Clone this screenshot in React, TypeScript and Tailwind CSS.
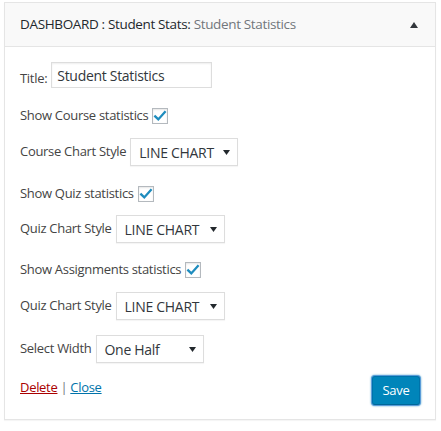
import React from "react";

const font = { fontFamily: '"Open Sans", "Liberation Sans", sans-serif' };

function Check() {
  return (
    <div className="ml-[4px] flex h-[16px] w-[16px] items-center justify-center border border-[#b4b9be] bg-white shadow-[inset_0_1px_2px_rgba(0,0,0,0.1)]">
      <svg width="14" height="14" viewBox="0 0 14 14">
        <path d="M2.2 7.4 L5.3 10.4 L11.8 3.2" fill="none" stroke="#1e8cbe" strokeWidth="2.3" strokeLinecap="square" />
      </svg>
    </div>
  );
}

function Select({ value, w }: { value: string; w: string }) {
  return (
    <div className={`ml-[4px] flex h-[28px] items-center justify-between border border-[#ddd] bg-white pl-[8px] pr-[7px] text-[14px] tracking-[-0.3px] text-[#32373c] shadow-[0_1px_1px_rgba(0,0,0,0.04)] ${w}`}>
      <span>{value}</span>
      <svg width="7" height="5" viewBox="0 0 7 5">
        <path d="M0 0 L7 0 L3.5 5 Z" fill="#23282d" />
      </svg>
    </div>
  );
}

export default function App() {
  return (
    <div className="min-h-[431px] w-[441px] bg-white pl-[4px] pt-[2px] text-[13px] tracking-[-0.3px] text-[#444]" style={font}>
      <div className="w-[432px] border border-[#e5e5e5] bg-white shadow-[0_1px_1px_rgba(0,0,0,0.04)]">
        <div className="flex h-[44px] items-center justify-between border-b border-[#e5e5e5] bg-[#f9f9f9] pl-[15px] pr-[17px]">
          <div className="text-[13.5px] tracking-[-0.35px] text-[#23282d]">
            DASHBOARD : Student Stats: <span className="text-[#72777c]">Student Statistics</span>
          </div>
          <svg width="8" height="6" viewBox="0 0 8 6">
            <path d="M0 6 L8 6 L4 0 Z" fill="#32373c" />
          </svg>
        </div>
        <div className="px-[15px] pb-[14px]">
          <div className="mt-[15px] flex h-[26px] items-end">
            <span className="leading-[20px]">Title:</span>
            <div className="ml-[4px] flex h-[26px] w-[161px] items-center border border-[#ddd] bg-white px-[5px] text-[14px] tracking-[-0.3px] text-[#32373c] shadow-[inset_0_1px_2px_rgba(0,0,0,0.07)]">
              Student Statistics
            </div>
          </div>
          <div className="mt-[20px] flex h-[16px] items-center">
            <span>Show Course statistics</span>
            <Check />
          </div>
          <div className="mt-[14px] flex h-[28px] items-center">
            <span>Course Chart Style</span>
            <Select value="LINE CHART" w="w-[108px]" />
          </div>
          <div className="mt-[20px] flex h-[16px] items-center">
            <span>Show Quiz statistics</span>
            <Check />
          </div>
          <div className="mt-[13px] flex h-[28px] items-center">
            <span>Quiz Chart Style</span>
            <Select value="LINE CHART" w="w-[109px]" />
          </div>
          <div className="mt-[19px] flex h-[16px] items-center">
            <span>Show Assignments statistics</span>
            <Check />
          </div>
          <div className="mt-[14px] flex h-[28px] items-center">
            <span>Quiz Chart Style</span>
            <Select value="LINE CHART" w="w-[109px]" />
          </div>
          <div className="mt-[15px] flex h-[28px] items-center">
            <span>Select Width</span>
            <Select value="One Half" w="w-[108px]" />
          </div>
          <div className="mt-[13px] flex items-start justify-between">
            <div className="mt-[1px] flex leading-[20px]">
              <a className="text-[#a00] underline">Delete</a>
              <span className="mx-[3px] text-[#72777c]">|</span>
              <a className="text-[#0073aa] underline">Close</a>
            </div>
            <button className="h-[29px] w-[48px] rounded-[3px] border border-[#0073aa] border-b-[#006799] bg-[#0085ba] text-[13px] text-white shadow-[0_0_0_1px_#5b9dd9,0_0_2px_1px_rgba(30,140,190,0.8)]">
              Save
            </button>
          </div>
        </div>
      </div>
    </div>
  );
}
